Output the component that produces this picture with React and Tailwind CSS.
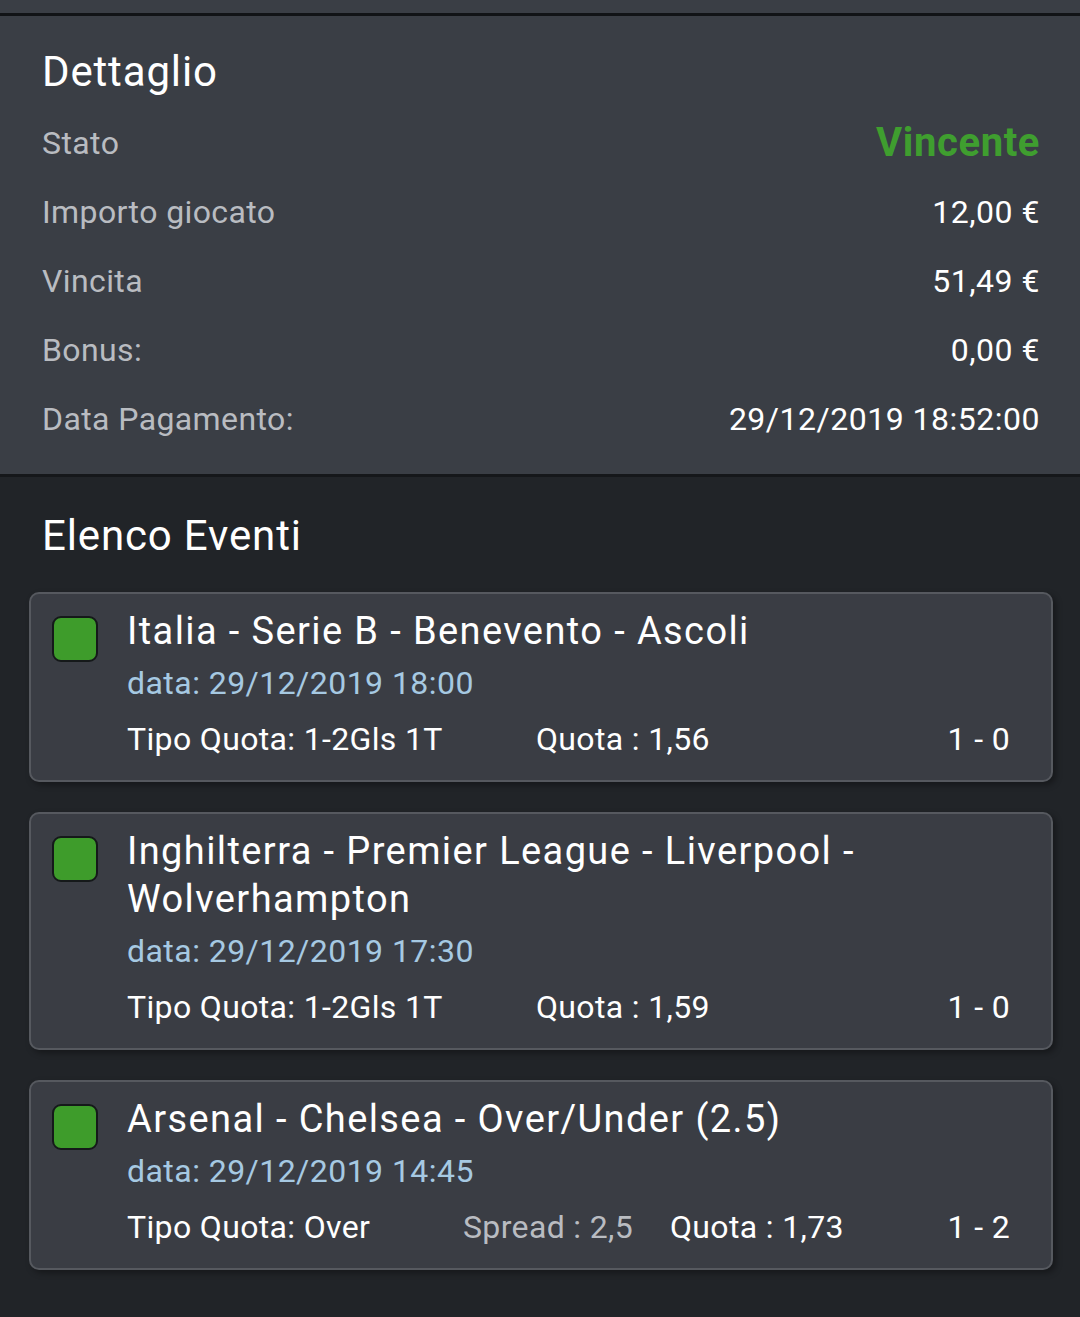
import React from 'react';

const rows = [
  { label: 'Importo giocato', value: '12,00 €' },
  { label: 'Vincita', value: '51,49 €' },
  { label: 'Bonus:', value: '0,00 €' },
  { label: 'Data Pagamento:', value: '29/12/2019 18:52:00' },
];

const events = [
  {
    title: 'Italia - Serie B - Benevento - Ascoli',
    date: '29/12/2019 18:00',
    tipo: '1-2Gls 1T',
    quota: '1,56',
    score: '1 - 0',
  },
  {
    title: 'Inghilterra - Premier League - Liverpool - Wolverhampton',
    date: '29/12/2019 17:30',
    tipo: '1-2Gls 1T',
    quota: '1,59',
    score: '1 - 0',
  },
  {
    title: 'Arsenal - Chelsea - Over/Under (2.5)',
    date: '29/12/2019 14:45',
    tipo: 'Over',
    spread: '2,5',
    quota: '1,73',
    score: '1 - 2',
  },
];

const EventCard = ({ ev }) => (
  <div className="flex rounded-[10px] border-2 border-[#56595f] bg-[#3a3d44] pt-[13px] pb-[13px] pl-[21px] pr-[41px] shadow-[3px_3px_6px_rgba(0,0,0,0.35)]">
    <div className="mt-[9px] mr-[29px] h-[46px] w-[46px] shrink-0 rounded-[9px] border-2 border-[#15191a] bg-[#3e9c2b]" />
    <div className="flex-1">
      <div className="text-[38px] leading-[48px] tracking-[1.4px] text-white">{ev.title}</div>
      <div className="text-[32px] leading-[56px] tracking-[0.45px] text-[#a6c9e2]">data: {ev.date}</div>
      <div className="flex text-[32px] leading-[56px] tracking-[0.35px] text-white">
        {ev.spread ? (
          <>
            <div className="w-[336px]">Tipo Quota: {ev.tipo}</div>
            <div className="w-[207px] text-[#b9bcc1]">Spread : {ev.spread}</div>
          </>
        ) : (
          <div className="w-[409px]">Tipo Quota: {ev.tipo}</div>
        )}
        <div>Quota : {ev.quota}</div>
        <div className="ml-auto">{ev.score}</div>
      </div>
    </div>
  </div>
);

const App = () => {
  return (
    <div className="min-h-screen bg-[#212428]" style={{ fontFamily: 'Roboto, "Noto Sans", sans-serif' }}>
      <div className="h-[13px] bg-[#3a3e45]" />
      <div className="h-[3px] bg-[#111316]" />
      <div className="bg-[#3a3e45] pl-[42px] pr-[40px] pt-[28px] pb-[21px]">
        <h2 className="text-[42px] leading-[56px] tracking-[0.85px] text-white">Dettaglio</h2>
        <div className="mt-[8px]">
          <div className="flex h-[69px] items-center justify-between">
            <span className="text-[32px] tracking-[0.4px] text-[#b9bcc1]">Stato</span>
            <span className="text-[40px] font-bold tracking-[0.6px] text-[#3f9e2f]">Vincente</span>
          </div>
          {rows.map((r) => (
            <div key={r.label} className="flex h-[69px] items-center justify-between">
              <span className="text-[32px] tracking-[0.4px] text-[#b9bcc1]">{r.label}</span>
              <span className="text-[32px] tracking-[0.5px] text-white">{r.value}</span>
            </div>
          ))}
        </div>
      </div>
      <div className="h-[3px] bg-[#15171a]" />
      <div className="pt-[31px] pb-[40px]">
        <h2 className="px-[42px] text-[42px] leading-[56px] tracking-[0.85px] text-white">Elenco Eventi</h2>
        <div className="mt-[28px] flex flex-col gap-[30px] pl-[29px] pr-[27px]">
          {events.map((ev) => (
            <EventCard key={ev.title} ev={ev} />
          ))}
        </div>
      </div>
    </div>
  );
};

export default App;
